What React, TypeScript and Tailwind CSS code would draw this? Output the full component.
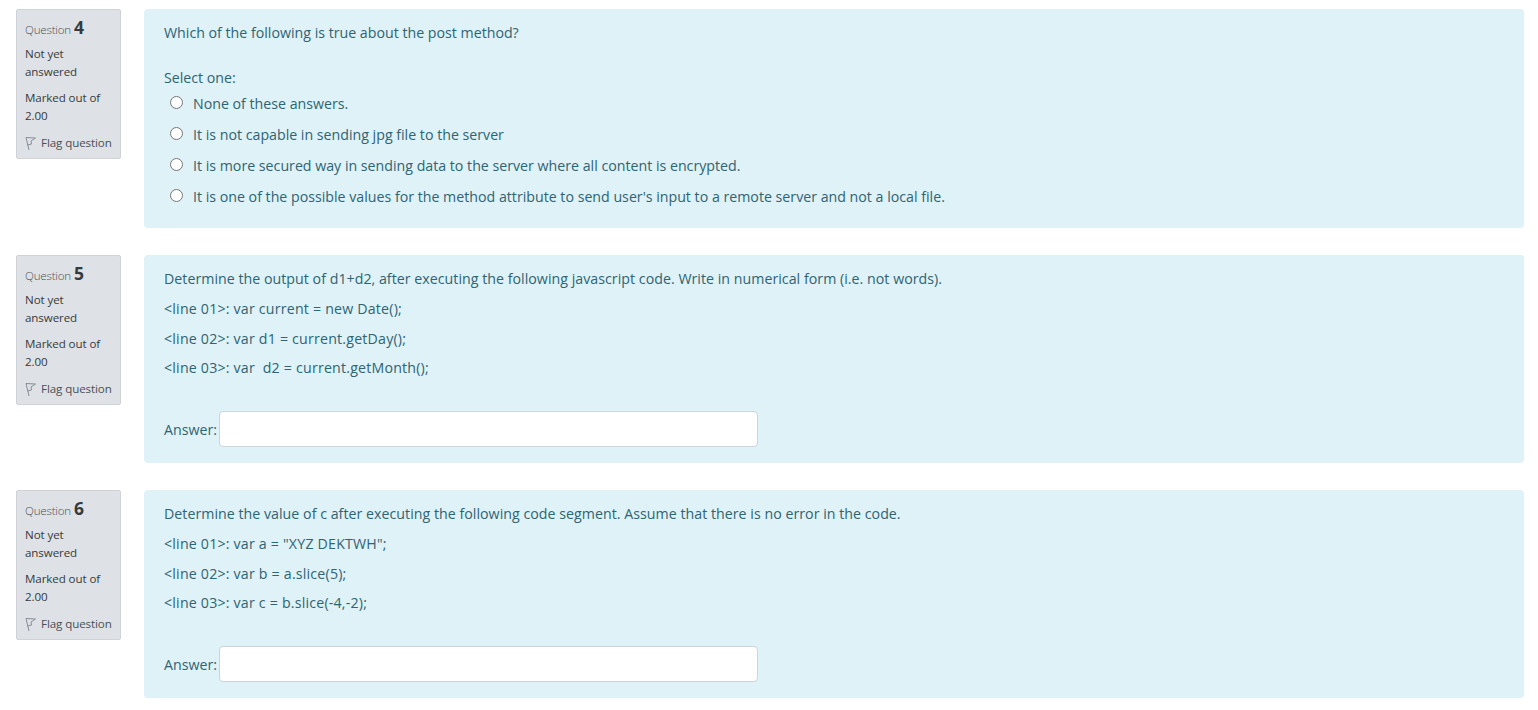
import { ReactNode } from 'react';

const font = { fontFamily: '"Open Sans", "Noto Sans", sans-serif' };

function FlagIcon() {
  return (
    <svg width="12" height="15" viewBox="0 0 12 15" fill="none" stroke="#868e96" strokeWidth="1" className="shrink-0">
      <path d="M4 14 L1 1.5 L10.5 2 L6 5 L6.5 8 L2.6 9" />
    </svg>
  );
}

function QuestionInfo({ number }: { number: number }) {
  return (
    <div className="w-[105px] h-[150px] shrink-0 bg-[#dee2e6] border border-[#cfd3d7] rounded-[2px] pl-2 pt-[8px] text-[11.6px] leading-[18px] text-[#373a3c] tracking-[-0.1px]">
      <h3 className="flex items-baseline h-[24px] font-normal">
        <span className="font-light text-[#495057] tracking-[-0.2px]">Question</span>
        <span className="ml-[3px] text-[17.5px] font-bold text-[#373a3c]">{number}</span>
      </h3>
      <div className="mt-[3px]">Not yet<br />answered</div>
      <div className="mt-[8px]">Marked out of<br />2.00</div>
      <div className="mt-[9px] flex items-center gap-[4px] text-[#495057]">
        <FlagIcon />
        <span>Flag question</span>
      </div>
    </div>
  );
}

function Question({ number, height, children }: { number: number; height: string; children: ReactNode }) {
  return (
    <div className="flex items-start gap-[23px]">
      <QuestionInfo number={number} />
      <div className={`flex-1 bg-[#def2f8] rounded-[4px] pl-5 pt-[14px] text-[#2f6473] text-[14.2px] leading-[20px] ${height}`}>
        {children}
      </div>
    </div>
  );
}

function Option({ label }: { label: string }) {
  return (
    <label className="flex items-center h-[31px] pl-[6px]">
      <span className="-mt-[2px] w-[13px] h-[13px] rounded-full bg-white border border-[#767676] shrink-0" />
      <span className="ml-[10px]">{label}</span>
    </label>
  );
}

function CodeQuestion({ title, lines }: { title: string; lines: string[] }) {
  return (
    <>
      <p className="tracking-[0.03px]">{title}</p>
      <div className="mt-[10px] flex flex-col gap-[9.5px] whitespace-pre tracking-[0.2px]">
        {lines.map((line) => (
          <p key={line}>{line}</p>
        ))}
      </div>
      <div className="mt-[33px] flex items-center">
        <span className="pt-[2px]">Answer:</span>
        <input type="text" className="ml-[2px] w-[539px] h-[36px] bg-white border border-[#ced4da] rounded-[4px]" />
      </div>
    </>
  );
}

export default function App() {
  return (
    <div style={font} className="min-h-screen bg-white pl-4 pr-[14px] pt-[9px] flex flex-col gap-[27px]">
      <Question number={4} height="h-[219px]">
        <p>Which of the following is true about the post method?</p>
        <p className="mt-[25px]">Select one:</p>
        <div>
          <Option label="None of these answers." />
          <Option label="It is not capable in sending jpg file to the server" />
          <Option label="It is more secured way in sending data to the server where all content is encrypted." />
          <Option label="It is one of the possible values for the method attribute to send user's input to a remote server and not a local file." />
        </div>
      </Question>
      <Question number={5} height="h-[208px]">
        <CodeQuestion
          title="Determine the output of d1+d2, after executing the following javascript code. Write in numerical form (i.e. not words)."
          lines={['<line 01>: var current = new Date();', '<line 02>: var d1 = current.getDay();', '<line 03>: var  d2 = current.getMonth();']}
        />
      </Question>
      <Question number={6} height="h-[208px]">
        <CodeQuestion
          title="Determine the value of c after executing the following code segment. Assume that there is no error in the code."
          lines={['<line 01>: var a = "XYZ DEKTWH";', '<line 02>: var b = a.slice(5);', '<line 03>: var c = b.slice(-4,-2);']}
        />
      </Question>
    </div>
  );
}
